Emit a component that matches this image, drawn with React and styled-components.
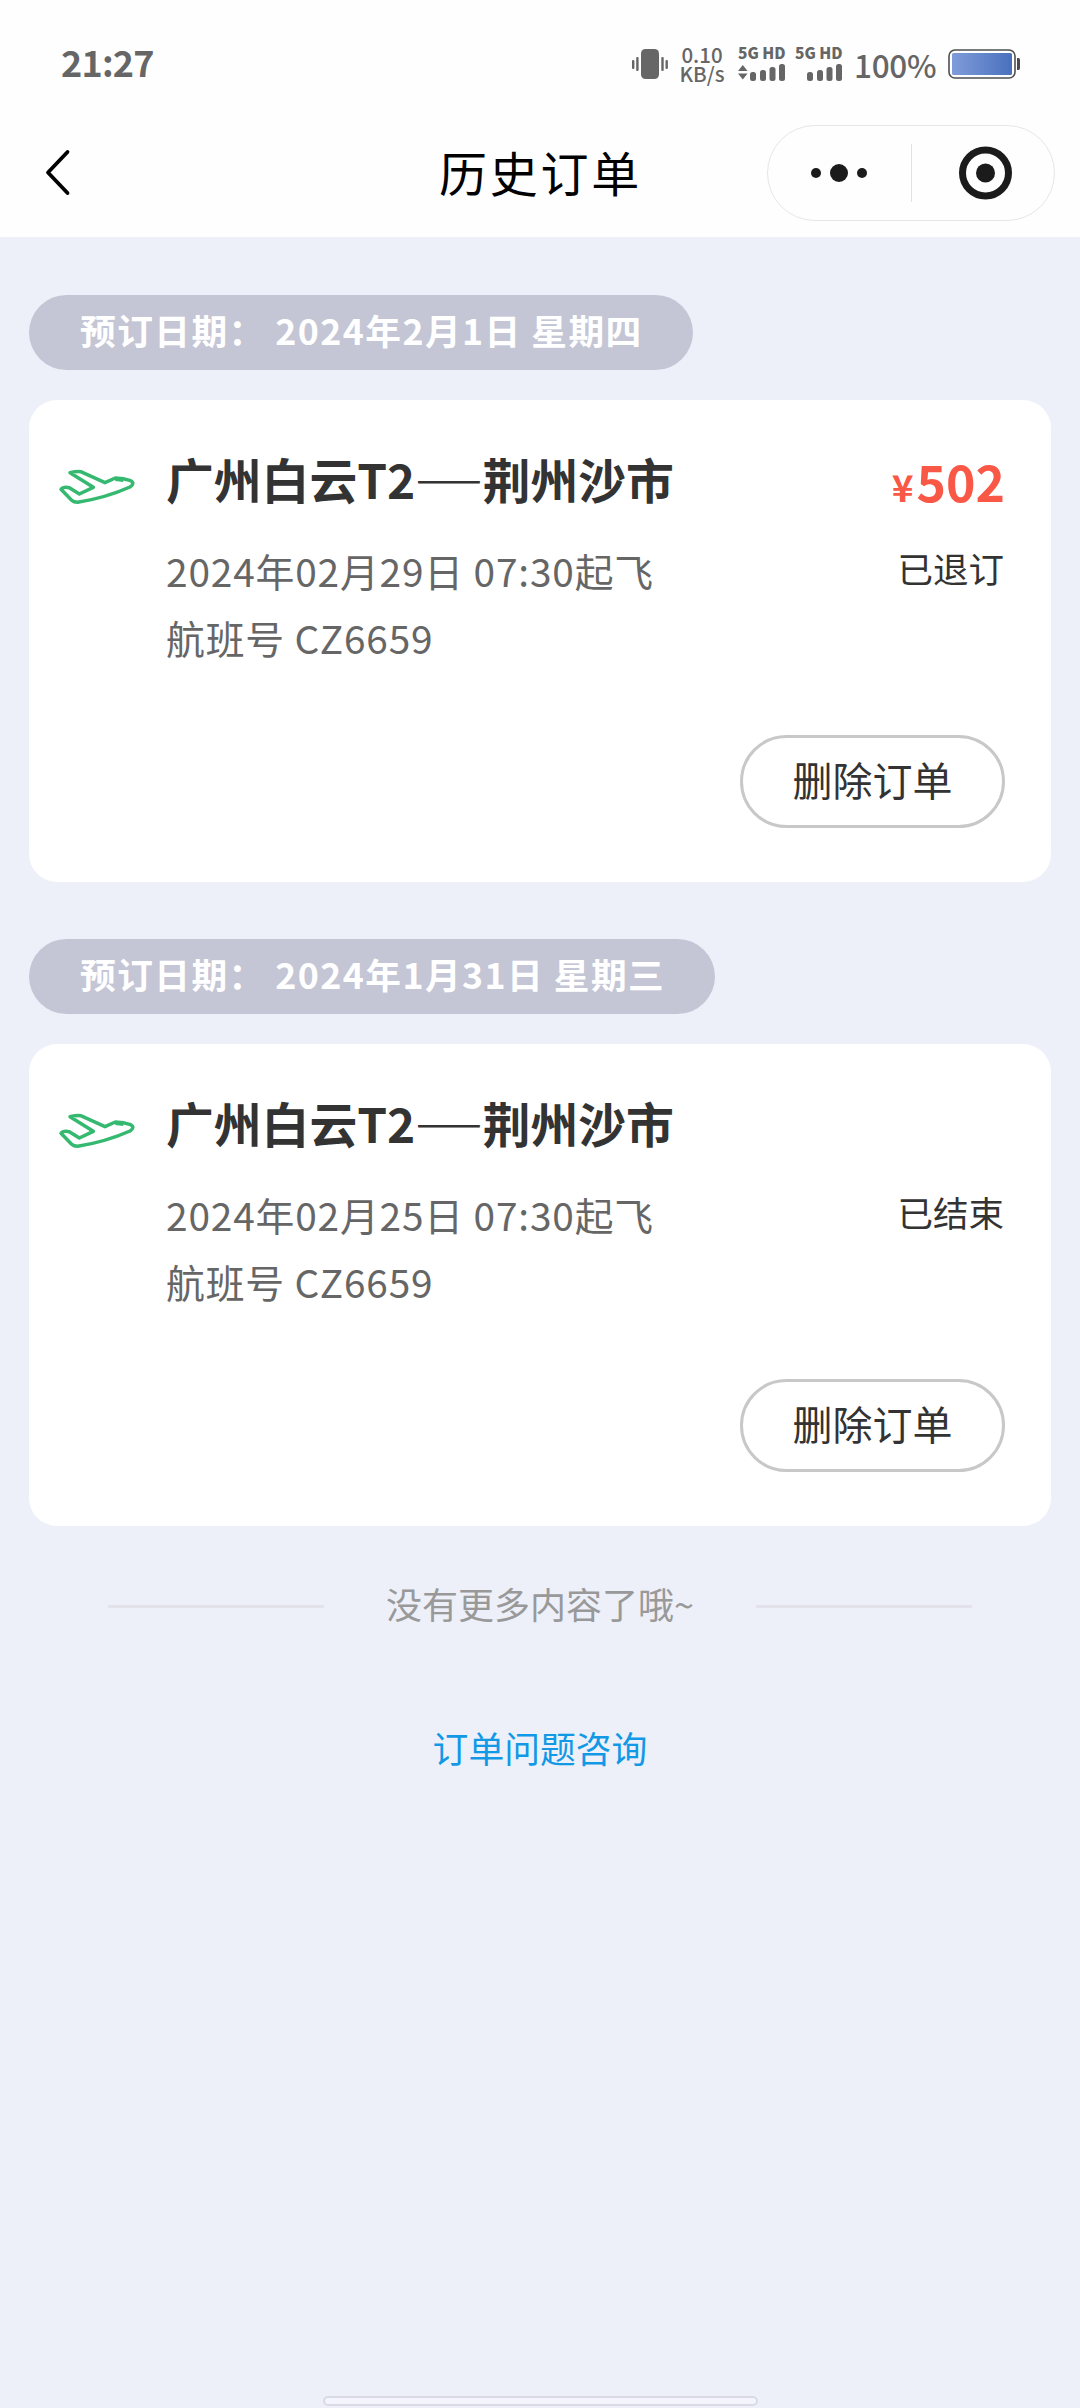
// All Imports
import React, { useState } from 'react';
import styled, { createGlobalStyle } from 'styled-components';

const GlobalStyle = createGlobalStyle`
    * {
        box-sizing: border-box;
    }
    body {
        margin: 0;
        background: #edf0f9;
        font-family: 'Noto Sans CJK SC', 'Noto Sans', sans-serif;
    }
`

// Styled Components
const Page = styled.div`
    width: 1080px;
    height: 2408px;
    display: flex;
    flex-direction: column;
    background: #edf0f9;
`

const Header = styled.header`
    height: 237px;
    background: #fefefe;
`

const StatusBar = styled.div`
    height: 124px;
    padding: 0 59px 0 61px;
    display: flex;
    align-items: flex-start;
    color: #666;
`

const Clock = styled.div`
    margin-top: 39px;
    font-size: 36px;
    line-height: 44px;
    font-weight: 600;
    letter-spacing: -0.8px;
    flex: 1;
`

const VibrateIcon = styled.svg`
    margin-top: 49px;
    width: 38px;
    height: 30px;
`

const Speed = styled.div`
    width: 46px;
    margin: 45px 0 0 10px;
    display: flex;
    flex-direction: column;
    align-items: center;
    font-size: 20.5px;
    line-height: 19px;
    font-weight: 500;
    white-space: nowrap;
`

const Network = styled.div`
    width: 48px;
    margin: 45px 0 0 9px;
    display: flex;
    flex-direction: column;
    font-size: 15.5px;
    line-height: 15px;
    font-weight: 900;
    white-space: nowrap;
    ${Speed} + & {
        margin-left: 13px;
    }
    svg {
        margin-top: 4px;
        width: 48px;
        height: 17px;
    }
`

const Percent = styled.div`
    margin: 46px 12px 0 11px;
    width: 82px;
    font-size: 31.5px;
    line-height: 36px;
    font-weight: 500;
    letter-spacing: -0.3px;
    white-space: nowrap;
`

const BatteryIcon = styled.svg`
    margin-top: 49px;
    width: 73px;
    height: 30px;
`

const NavBar = styled.div`
    height: 97px;
    padding: 0 25px 0 42px;
    display: grid;
    grid-template-columns: 288px 1fr 288px;
    align-items: center;
`

const BackButton = styled.button`
    padding: 0;
    border: none;
    background: none;
    width: 32px;
    height: 52px;
    svg {
        display: block;
    }
`

const PageTitle = styled.h1`
    margin: 0 0 4px -16px;
    font-size: 48px;
    line-height: 60px;
    font-weight: 400;
    letter-spacing: 2.8px;
    text-align: center;
    color: #000;
`

const Capsule = styled.div`
    width: 288px;
    height: 96px;
    border: 1px solid #e6e6e6;
    border-radius: 48px;
    display: flex;
    align-items: center;
`

const CapsuleItem = styled.div`
    flex: 1;
    display: flex;
    justify-content: center;
    & + & {
        border-left: 1px solid #e2e2e2;
    }
    svg {
        display: block;
    }
`

const Content = styled.main`
    flex: 1;
    padding: 58px 29px 0;
    display: flex;
    flex-direction: column;
    align-items: stretch;
`

const Order = styled.section`
    margin-bottom: 57px;
`

const DatePill = styled.div`
    width: fit-content;
    height: 74.5px;
    padding: 0 50px 0 51px;
    border-radius: 38px;
    background: #c4c6d5;
    color: #fff;
    font-size: 35.7px;
    line-height: 70px;
    font-weight: 700;
    letter-spacing: 1.45px;
    white-space: pre;
`

const Card = styled.div`
    height: 482.5px;
    margin-top: 30px;
    padding: 54px 46px 0 30px;
    border-radius: 28px;
    background: #fff;
    display: grid;
    grid-template-columns: 107px 1fr auto;
    grid-template-rows: 60px 90px 67px 1fr;
`

const PlaneIcon = styled.svg`
    width: 80px;
    height: 37px;
    margin: 15px 0 0 -1px;
`

const Route = styled.h2`
    margin: 0;
    font-size: 47.8px;
    line-height: 50px;
    height: 50px;
    font-weight: 700;
    color: #333;
    display: flex;
    align-items: center;
    white-space: nowrap;
`

const Dash = styled.span`
    margin: 0 1px;
    padding-bottom: 6px;
    font-size: 39px;
    font-weight: 400;
`

const Price = styled.div`
    font-size: 50px;
    line-height: 52px;
    font-weight: 700;
    color: #f95846;
    text-align: right;
    small {
        margin-right: 3px;
        font-size: 37px;
    }
`

const Detail = styled.div`
    grid-column: 2;
    align-self: end;
    font-size: 38.8px;
    line-height: 67px;
    letter-spacing: 0.85px;
    color: #666;
    white-space: nowrap;
`

const State = styled.div`
    align-self: end;
    margin: 0 1px 3px 0;
    font-size: 35.5px;
    line-height: 67px;
    color: #333;
    text-align: right;
`

const DeleteButton = styled.button`
    grid-column: 2 / 4;
    justify-self: end;
    width: 265px;
    height: 93px;
    margin-top: 64px;
    padding: 0 0 4px;
    border: 3px solid #c8c8c8;
    border-radius: 47px;
    background: #fff;
    color: #333;
    font-family: inherit;
    font-size: 40px;
`

const NoMore = styled.div`
    display: flex;
    align-items: center;
    justify-content: center;
    gap: 62px;
    height: 46px;
    font-size: 36px;
    line-height: 40px;
    color: #999;
    span {
        padding-bottom: 7px;
    }
    &::before,
    &::after {
        content: '';
        width: 216px;
        height: 3px;
        background: #e3e2eb;
    }
`

const HelpLink = styled.a`
    align-self: center;
    margin-top: 93px;
    font-size: 35.8px;
    line-height: 50px;
    color: #1299e6;
    text-decoration: none;
`

const HomeBar = styled.div`
    align-self: center;
    width: 435px;
    height: 10px;
    margin-bottom: 2px;
    border: 2px solid #dadae4;
    border-radius: 5px;
    background: #f3f4fc;
`

const orders = [
    {
        id: 1,
        booked: '2024年2月1日 星期四',
        from: '广州白云T2',
        to: '荆州沙市',
        time: '2024年02月29日 07:30起飞',
        flight: 'CZ6659',
        price: 502,
        state: '已退订'
    },
    {
        id: 2,
        booked: '2024年1月31日 星期三',
        from: '广州白云T2',
        to: '荆州沙市',
        time: '2024年02月25日 07:30起飞',
        flight: 'CZ6659',
        state: '已结束'
    }
]

// Signal bars, with the little data arrows on the active sim
const Signal = ({ active }) => (
    <Network>
        <span>5G HD</span>
        <svg viewBox="0 0 48 17" fill="#666">
            {active && <path d="M0 7L4.800 1L9.600 7ZM0 9.500L4.800 15.500L9.600 9.500Z" />}
            <rect x="12" y="8" width="6" height="9" rx="2.5" />
            <rect x="22" y="6" width="6" height="11" rx="2.5" />
            <rect x="31.5" y="3" width="6" height="14" rx="2.5" />
            <rect x="41" y="0" width="6" height="17" rx="2.5" />
        </svg>
    </Network>
)

const Plane = () => (
    <PlaneIcon viewBox="56 86 240 111" fill="none" stroke="#35b970" strokeWidth="10.5" strokeLinejoin="round">
        <path d="M92 97Q110 93 124 94L197 127L228 113Q252 114 274 121Q288 129 272 140Q200 172 115 186Q103 186 97 180L65 147Q72 138 90 142L120 161L162 141Z" />
        <path d="M228 117L252 120" />
    </PlaneIcon>
)

// Order History Component
const App = () => {
    const [list, setList] = useState(orders)

    // Remove the order from the list
    const handleDelete = (id) => {
        setList(list.filter(order => order.id !== id))
    }

    return (
        <Page>
            <GlobalStyle />
            <Header>
                <StatusBar>
                    <Clock>21:27</Clock>
                    <VibrateIcon viewBox="0 0 38 30" fill="#666">
                        <rect x="10" y="0" width="18" height="30" rx="4.5" />
                        <rect x="5.2" y="8" width="2.4" height="14" rx="1" />
                        <rect x="1" y="11" width="2.4" height="9" rx="1" />
                        <rect x="30.3" y="8" width="2.4" height="14" rx="1" />
                        <rect x="34.5" y="11" width="2.4" height="9" rx="1" />
                    </VibrateIcon>
                    <Speed>
                        <span>0.10</span>
                        <span>KB/s</span>
                    </Speed>
                    <Signal active />
                    <Signal />
                    <Percent>100%</Percent>
                    <BatteryIcon viewBox="0 0 73 30">
                        <defs>
                            <linearGradient id="charge">
                                <stop offset="0" stopColor="#7f9cd9" />
                                <stop offset="1" stopColor="#4a70bd" />
                            </linearGradient>
                        </defs>
                        <rect x="1" y="1" width="66" height="28" rx="6" fill="#fff" stroke="#4f4f4f" strokeWidth="1.6" />
                        <rect x="4" y="4" width="60" height="22" rx="1.5" fill="url(#charge)" />
                        <path d="M69 9h1.5q1.5 0 1.5 2v8q0 2-1.5 2H69z" fill="#4a4a4a" />
                    </BatteryIcon>
                </StatusBar>
                <NavBar>
                    <BackButton>
                        <svg width="32" height="52" viewBox="0 0 32 52" fill="none" stroke="#000" strokeWidth="3.8" strokeLinecap="round" strokeLinejoin="round">
                            <path d="M25.5 5L6 25.5L25.5 46" />
                        </svg>
                    </BackButton>
                    <PageTitle>历史订单</PageTitle>
                    <Capsule>
                        <CapsuleItem>
                            <svg width="58" height="58" viewBox="0 0 58 58" fill="#1b1b1b">
                                <circle cx="6" cy="29" r="5" />
                                <circle cx="29" cy="29" r="9" />
                                <circle cx="52" cy="29" r="5" />
                            </svg>
                        </CapsuleItem>
                        <CapsuleItem>
                            <svg width="60" height="58" viewBox="0 0 60 58" fill="#1b1b1b">
                                <circle cx="32.5" cy="29" r="23" fill="none" stroke="#1b1b1b" strokeWidth="7" />
                                <circle cx="32.5" cy="29" r="9.5" />
                            </svg>
                        </CapsuleItem>
                    </Capsule>
                </NavBar>
            </Header>
            <Content>
                {list.map(order => (
                    <Order key={order.id}>
                        <DatePill>预订日期： {order.booked}</DatePill>
                        <Card>
                            <Plane />
                            <Route>{order.from}<Dash>——</Dash>{order.to}</Route>
                            <Price>{order.price && <><small>¥</small>{order.price}</>}</Price>
                            <Detail>{order.time}</Detail>
                            <State>{order.state}</State>
                            <Detail>航班号 {order.flight}</Detail>
                            <DeleteButton onClick={() => handleDelete(order.id)}>删除订单</DeleteButton>
                        </Card>
                    </Order>
                ))}
                <NoMore><span>没有更多内容了哦~</span></NoMore>
                <HelpLink href="#">订单问题咨询</HelpLink>
            </Content>
            <HomeBar />
        </Page>
    );
};

export default App;
